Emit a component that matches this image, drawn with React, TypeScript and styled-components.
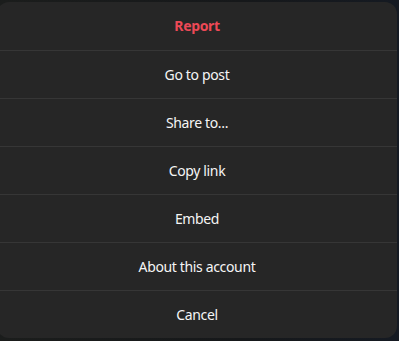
import React from "react";
import styled, { createGlobalStyle } from "styled-components";

const items = [
  { label: "Report", danger: true },
  { label: "Go to post" },
  { label: "Share to..." },
  { label: "Copy link" },
  { label: "Embed" },
  { label: "About this account" },
  { label: "Cancel" },
];

const App: React.FC = () => {
  return (
    <>
      <GlobalStyle />
      <Backdrop>
        <Dialog>
          {items.map((item) => (
            <MenuButton key={item.label} $danger={item.danger}>
              {item.label}
            </MenuButton>
          ))}
        </Dialog>
      </Backdrop>
    </>
  );
};

export default App;

const GlobalStyle = createGlobalStyle`
  html, body {
    margin: 0;
    padding: 0;
    background: #17191a;
    overflow: hidden;
  }
`;

const Backdrop = styled.div`
  width: 399px;
  height: 341px;
  padding-top: 2px;
  box-sizing: border-box;
  background: linear-gradient(90deg, #1b1d1c 0%, #16181a 60%, #151a22 100%);
`;

const Dialog = styled.div`
  width: 400px;
  margin-left: -3px;
  background: #262626;
  border-radius: 12px;
  overflow: hidden;
  display: flex;
  flex-direction: column;
`;

const MenuButton = styled.button<{ $danger?: boolean }>`
  height: 48px;
  border: none;
  border-top: 1px solid #363636;
  background: transparent;
  color: ${(p) => (p.$danger ? "#ed4956" : "#f5f5f5")};
  font-family: "Noto Sans", "Open Sans", sans-serif;
  font-size: 14px;
  letter-spacing: -0.35px;
  font-weight: ${(p) => (p.$danger ? 700 : 400)};
  padding: 0 0 1px;
  cursor: pointer;

  &:first-child {
    border-top: none;
  }
`;
